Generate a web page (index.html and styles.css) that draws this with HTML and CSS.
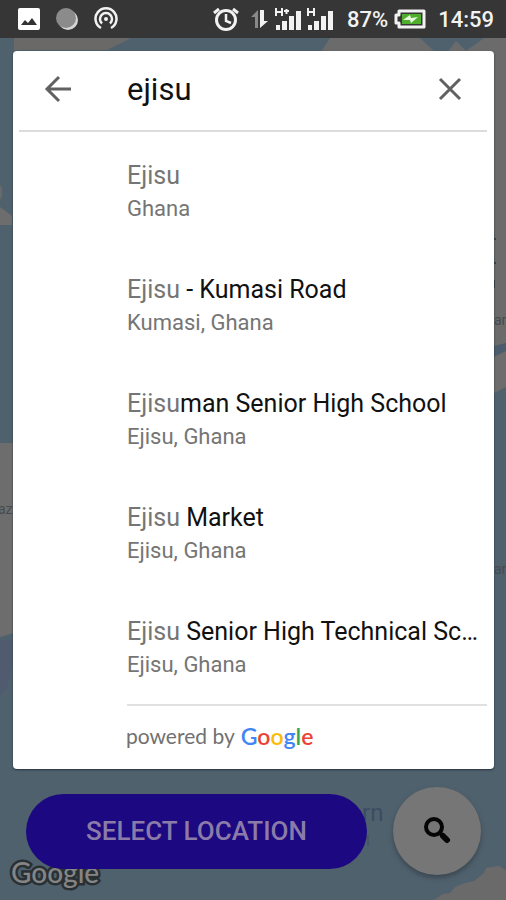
FILE: index.html
```html
<!DOCTYPE html>
<html lang="en">
<head>
<meta charset="utf-8">
<meta name="viewport" content="width=device-width, initial-scale=1">
<title>Select location</title>
<link rel="stylesheet" href="styles.css">
</head>
<body>
<header class="status">
  <div class="status-group notices">
    <svg width="22" height="22" viewBox="0 0 22 22" aria-hidden="true"><rect width="22" height="22" rx="2" fill="#fff"/><path d="M3 17l4-5 3 3 4-5 5 7z" fill="#333"/></svg>
    <svg width="24" height="24" viewBox="0 0 24 24" aria-hidden="true"><circle cx="13" cy="13" r="10" fill="#d6d6d6"/><circle cx="11" cy="11" r="10" fill="#8b8b8b"/></svg>
    <svg width="24" height="24" viewBox="0 0 24 24" fill="none" stroke="#f2f2f2" stroke-width="2.500" aria-hidden="true"><path d="M7 21a10.500 10.500 0 1 1 10 0M8 16.500a6 6 0 1 1 8 0"/><circle cx="12" cy="12" r="2" fill="#f2f2f2" stroke="none"/></svg>
  </div>
  <div class="status-group system">
    <svg width="26" height="24" viewBox="0 0 26 24" fill="none" stroke="#f2f2f2" stroke-width="3" aria-hidden="true"><circle cx="13" cy="13" r="9.500"/><path d="M13 7v7l5 2" stroke-width="2.500"/><path d="M1 6l5-4M25 6l-5-4"/></svg>
    <svg class="arrows" width="18" height="20" viewBox="0 0 18 20" aria-hidden="true"><path d="M7 19V1L0 8h4v11z" fill="#888"/><path d="M9 1v18l8-7h-4V1z" fill="#f2f2f2"/></svg>
    <svg width="26" height="22" viewBox="0 0 26 22" fill="#f2f2f2" aria-hidden="true"><path d="M1 17h4v5H1zM7 13h5v9H7zM14 8h5v14h-5zM21 3h5v19h-5z"/><path d="M1 0v8M7 0v8M1 4h6M9 3h5M11.500 1v5" stroke="#f2f2f2" stroke-width="2"/></svg>
    <svg width="26" height="22" viewBox="0 0 26 22" fill="#f2f2f2" aria-hidden="true"><path d="M1 17h4v5H1zM7 13h5v9H7zM14 8h5v14h-5zM21 3h5v19h-5z"/><path d="M1 0v8M7 0v8M1 4h6" stroke="#f2f2f2" stroke-width="2"/></svg>
    <span class="battery-level">87%</span>
    <svg class="battery" width="32" height="20" viewBox="0 0 32 20" aria-hidden="true"><path d="M5 2h25v16H5v-4H2V6h3z" fill="none" stroke="#f2f2f2" stroke-width="3" stroke-linejoin="round"/><path d="M8 5h19v10H8z" fill="#4fae2c"/><path d="M9 11l7-5 1 3 7-1-7 6-1-3z" fill="#e6fadc"/></svg>
    <time>14:59</time>
  </div>
</header>
<main class="screen">
  <svg class="map" viewBox="0 38 506 862" preserveAspectRatio="xMidYMid slice" aria-hidden="true">
    <rect y="38" width="506" height="862" fill="#50616e"/>
    <path d="M14 38h117l-24 12H14z" fill="#6a6968"/>
    <path d="M330 38h90l15 14H321zM446 54l10-13 10 10 18-13h22v310l-12 8V60z" fill="#6b6b6b"/>
    <path d="M494 346l12-3v8l-12 6z" fill="#4c5c6c"/>
    <path d="M494 357l12-6v36l-12 6zM0 207l12 9v9L0 225zM0 443h14v190l-14 4z" fill="#6d6d6d"/>
    <path d="M0 185c3 2 3 11 0 15z" fill="#68696a"/>
    <path d="M0 640h14v18l-7 30-7 8z" fill="#515b70"/>
    <path d="M434 900l9-6 7-1 5-6 10-4 9-2 10-8 2-5 13-2 7 4v30z" fill="#6b6a6b"/>
    <g class="map-label"><text x="-2" y="514">az</text><text x="494" y="325">an</text><text x="494" y="574">an</text></g>
    <text class="place-label" x="362" y="821">rn</text>
    <path d="M368 835v11" stroke="#3b4c64"/>
    <path d="M494 239h2M494 263h2M494 280v8" stroke="#384345" stroke-width="2"/>
  </svg>
  <section class="card" aria-label="Place search">
    <form class="search">
      <button class="icon-button" type="button" aria-label="Back"><svg width="28" height="28" viewBox="0 0 28 28"><path d="M27 14H3M15 2L3 14l12 12"/></svg></button>
      <input class="query" type="text" value="ejisu" aria-label="Search places">
      <button class="icon-button" type="button" aria-label="Clear"><svg width="28" height="28" viewBox="0 0 28 28"><path d="M4 4l20 20M24 4L4 24"/></svg></button>
    </form>
    <ul class="results">
      <li><p class="place"><span>Ejisu</span></p><p class="area">Ghana</p></li>
      <li><p class="place"><span>Ejisu</span> - Kumasi Road</p><p class="area">Kumasi, Ghana</p></li>
      <li><p class="place"><span>Ejisu</span>man Senior High School</p><p class="area">Ejisu, Ghana</p></li>
      <li><p class="place"><span>Ejisu</span> Market</p><p class="area">Ejisu, Ghana</p></li>
      <li><p class="place"><span>Ejisu</span> Senior High Technical School</p><p class="area">Ejisu, Ghana</p></li>
    </ul>
    <p class="credit">powered by <span class="google"><span class="blue">G</span><span class="red">o</span><span class="yellow">o</span><span class="blue">g</span><span class="green">l</span><span class="red">e</span></span></p>
  </section>
  <span class="watermark">Google</span>
  <div class="actions">
    <button class="select" type="button">SELECT LOCATION</button>
    <button class="fab" type="button" aria-label="Search"><svg width="28" height="28" viewBox="0 0 28 28" fill="none" stroke="#060606"><circle cx="11" cy="10" r="8" stroke-width="4"/><path d="M16 15l4 4" stroke-width="4"/><path d="M20 19l4 4" stroke-width="6" stroke-linecap="round"/></svg></button>
  </div>
</main>
</body>
</html>
```

FILE: styles.css
```css
* { box-sizing: border-box; }

body {
  display: flex;
  flex-direction: column;
  min-height: 100vh;
  margin: 0;
  background: #50616e;
  font-family: Roboto, "Liberation Sans", sans-serif;
}

p, ul { margin: 0; padding: 0; }
ul { list-style: none; }
button { border: 0; padding: 0; background: none; font: inherit; }
svg { display: block; flex: none; }

.status {
  display: flex;
  align-items: center;
  justify-content: space-between;
  height: 38px;
  padding: 0 12px 0 18px;
  background: #363636;
  color: #f2f2f2;
  font-size: 22px;
  font-weight: 500;
}
.status-group { display: flex; align-items: center; }
.notices { gap: 15px; }
.system { gap: 6px; }
.arrows { margin-left: 6px; }
.battery-level { margin-left: 8px; }
.battery { margin-right: 6px; }

.screen {
  position: relative;
  flex: 1;
  overflow: hidden;
  padding: 13px 12px 24px 13px;
}
.map {
  position: absolute;
  inset: 0;
  width: 100%;
  height: 100%;
}
.map-label { fill: #454c50; font-size: 14px; }
.place-label { fill: #3b4c64; font-size: 24px; }

.card {
  position: relative;
  padding: 0 7px 0 6px;
  border-radius: 4px;
  background: #fff;
  box-shadow: 0 1px 2px #26323a;
}
.search {
  display: flex;
  align-items: center;
  height: 81px;
  padding: 0 23px 3px 25px;
  border-bottom: 2px solid #dcdcdc;
}
.icon-button svg {
  fill: none;
  stroke: #616161;
  stroke-width: 3;
}
.query {
  flex: 1;
  min-width: 0;
  padding: 0;
  margin-left: 55px;
  border: 0;
  outline: 0;
  background: none;
  color: #111;
  font: 31px Roboto, "Liberation Sans", sans-serif;
}

.results {
  display: flex;
  flex-direction: column;
  gap: 48px;
  margin-left: 108px;
  padding: 28px 0 22px;
  border-bottom: 2px solid #e0e0e0;
}
.place {
  overflow: hidden;
  color: #111;
  font-size: 25px;
  line-height: 32px;
  text-overflow: ellipsis;
  white-space: nowrap;
}
.place span { color: #757575; }
.area {
  color: #757575;
  font-size: 22px;
  line-height: 34px;
}
.credit {
  display: flex;
  align-items: center;
  gap: 6px;
  height: 63px;
  margin-left: 107px;
  padding-bottom: 4px;
  color: #717171;
  font-family: Lato, sans-serif;
  font-size: 21px;
}
.google { font-size: 23px; font-weight: 600; }
.blue { color: #4285f4; }
.red { color: #ea4335; }
.yellow { color: #fbbc05; }
.green { color: #34a853; }

.watermark {
  position: absolute;
  bottom: 10px;
  left: 11px;
  color: #858585;
  font: 500 28px/36px Lato, sans-serif;
  -webkit-text-stroke: 5px #293034;
  paint-order: stroke fill;
}
.actions {
  position: relative;
  display: flex;
  align-items: center;
  gap: 26px;
  margin-top: 18px;
  padding: 0 13px;
}
.select {
  flex: 1;
  height: 75px;
  border-radius: 38px;
  background: #1c0880;
  color: #8b7ba8;
  font-size: 26px;
  font-weight: 500;
}
.fab {
  display: grid;
  place-items: center;
  width: 88px;
  height: 88px;
  border-radius: 50%;
  background: #767676;
  box-shadow: 0 3px 5px #39474f;
}
```
